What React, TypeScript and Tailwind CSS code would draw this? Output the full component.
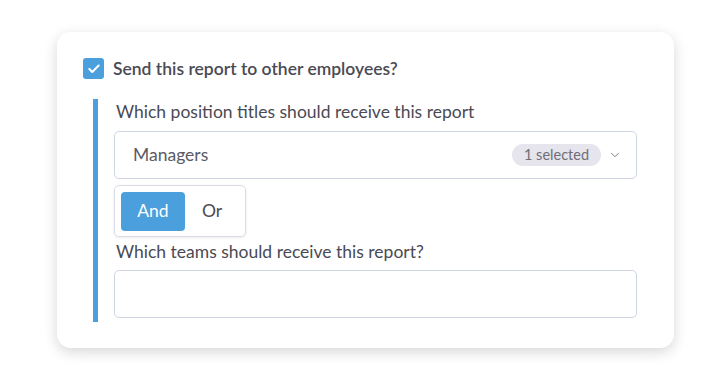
import { Check, ChevronDown } from 'lucide-react'

export default function App() {
  return (
    <div className="min-h-screen bg-white pt-[32px] pl-[57px] font-['Lato','Noto_Sans',sans-serif] text-[#4a4a54]">
      <div className="w-[617px] h-[316px] rounded-[14px] bg-white shadow-[0_4px_14px_rgba(0,0,0,0.16)] pt-[26px] pl-[26px] pr-[37px]">
        <label className="flex items-center gap-[9px] h-[21px]">
          <span className="w-[21px] h-[21px] rounded-[3px] bg-[#4a9fdc] flex items-center justify-center">
            <Check className="w-[14px] h-[14px] text-white" strokeWidth={3.5} />
          </span>
          <span className="text-[17.5px] font-semibold leading-none">Send this report to other employees?</span>
        </label>

        <div className="mt-[20px] ml-[10px] border-l-[5px] border-[#4a9fdc] pl-[16px] pt-[1px] pb-[4px]">
          <div className="pl-[2px] text-[17.5px] leading-[24px]">Which position titles should receive this report</div>
          <div className="mt-[7px] h-[48px] rounded-[5px] border border-[#cfd5e3] flex items-center pl-[18px] pr-[14px]">
            <span className="text-[17.5px] text-[#5a5a64] flex-1">Managers</span>
            <span className="h-[22px] px-[12px] rounded-full bg-[#e6e4ec] text-[14.5px] text-[#6e6e78] flex items-center">1 selected</span>
            <ChevronDown className="ml-[7px] w-[14px] h-[14px] text-[#6e6e78]" strokeWidth={1.5} />
          </div>

          <div className="mt-[6px] w-[132px] h-[52px] rounded-[5px] border border-[#dcdbe3] shadow-[0_1px_3px_rgba(0,0,0,0.08)] p-[6px] flex">
            <button className="w-[64px] h-[39px] rounded-[4px] bg-[#4a9fdc] text-white text-[17.5px]">And</button>
            <button className="flex-1 h-[39px] text-[17.5px] text-[#4a4a54]">Or</button>
          </div>

          <div className="mt-[3px] pl-[2px] text-[17.5px] leading-[24px]">Which teams should receive this report?</div>
          <div className="mt-[6px] h-[48px] rounded-[5px] border border-[#cfd5e3]" />
        </div>
      </div>
    </div>
  )
}
